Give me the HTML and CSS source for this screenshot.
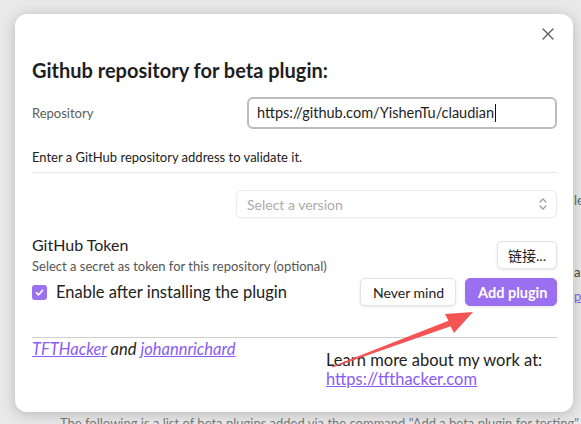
FILE: index.html
```html
<!DOCTYPE html>
<html>

	<head>
		<meta charset="UTF-8">
		<title>Add beta plugin</title>
		<link rel="stylesheet" href="styles.css">
	</head>

	<body>
		<!--page behind the modal-->
		<div class="page">
			<div class="page-side">
				<p class="side-word first">leave</p>
				<p class="side-word second">and</p>
				<p class="side-word third"><a href="#">plugin</a></p>
			</div>
			<p class="page-note">The following is a list of beta plugins added via the command "Add a beta plugin for testing". You can disable</p>
		</div>

		<!--modal-->
		<div class="modal">
			<div class="modal-close">
				<svg width="12" height="12" viewBox="0 0 12 12">
					<path d="M1 1L11 11M11 1L1 11" stroke="#5a5a5a" stroke-width="1.3" fill="none" stroke-linecap="round" />
				</svg>
			</div>
			<h2 class="modal-title">Github repository for beta plugin:</h2>

			<div class="row repo-row">
				<div class="row-label">Repository</div>
				<div class="text-input">https://github.com/YishenTu/claudian<span class="caret"></span></div>
			</div>
			<div class="row-desc">Enter a GitHub repository address to validate it.</div>

			<div class="row version-row">
				<div class="select">
					<span>Select a version</span>
					<svg width="10" height="14" viewBox="0 0 10 14">
						<path d="M2 5L5 2L8 5M2 9L5 12L8 9" stroke="#9a9a9a" stroke-width="1.2" fill="none" stroke-linecap="round" stroke-linejoin="round" />
					</svg>
				</div>
			</div>

			<div class="row token-row">
				<div class="token-info">
					<div class="token-name">GitHub Token</div>
					<div class="token-desc">Select a secret as token for this repository (optional)</div>
				</div>
				<button class="btn btn-small">链接...</button>
			</div>

			<div class="row action-row">
				<label class="check">
					<span class="check-box">
						<svg width="11" height="11" viewBox="0 0 11 11">
							<path d="M2.5 5.8L4.6 7.8L8.6 3.4" stroke="#fff" stroke-width="1.6" fill="none" stroke-linecap="round" stroke-linejoin="round" />
						</svg>
					</span>
					Enable after installing the plugin
				</label>
				<div class="actions">
					<button class="btn btn-wide">Never mind</button>
					<button class="btn btn-accent">Add plugin</button>
				</div>
			</div>

			<div class="footer">
				<div class="credits"><a href="#">TFTHacker</a> and <a href="#">johannrichard</a></div>
				<div class="more">
					<div>Learn more about my work at:</div>
					<a href="#">https://tfthacker.com</a>
				</div>
			</div>
		</div>

		<!--red arrow drawn on top-->
		<svg class="arrow" width="581" height="424" viewBox="0 0 581 424">
			<polygon points="332,366.5 448.4,320.7 445,314 473,312 454,333 450.6,326.3 332.6,367.4" fill="#f55454" />
		</svg>
	</body>

</html>
```
FILE: styles.css
```css
* {
	margin: 0;
	padding: 0;
	box-sizing: border-box;
}

body {
	width: 581px;
	height: 424px;
	overflow: hidden;
	position: relative;
	background-color: #e9e9e9;
	font-family: "Lato", "Noto Sans CJK SC", sans-serif;
	color: #222;
}

a {
	color: #8a5cf5;
}

/* page behind */
.page {
	width: 700px;
	color: #666;
	font-size: 13px;
	line-height: 18px;
	white-space: nowrap;
}

.page-side {
	padding-left: 574px;
	height: 410px;
}

.first {
	padding-top: 191px;
}

.second {
	margin-top: 54px;
	color: #444;
}

.third {
	margin-top: 6px;
}

.page-note {
	padding-left: 60px;
	margin-top: 4px;
	color: #7a7a7a;
}

/* modal */
.modal {
	position: absolute;
	left: 15px;
	top: 14px;
	width: 558px;
	height: 398px;
	background-color: #fff;
	border-radius: 12px;
	box-shadow: 0 2px 14px rgba(0, 0, 0, 0.22);
	padding: 42px 16px 0 17px;
}

.modal-close {
	position: absolute;
	right: 19px;
	top: 14px;
	width: 12px;
	height: 12px;
	line-height: 0;
}

.modal-title {
	font-size: 20px;
	font-weight: 700;
	line-height: 28px;
	color: #1e1e1e;
}

.row {
	display: flex;
	align-items: center;
}

.repo-row {
	margin-top: 13px;
}

.row-label {
	font-size: 13px;
	color: #5c5c5c;
}

.text-input {
	margin-left: auto;
	width: 310px;
	height: 32px;
	border: 2px solid #bcbcbc;
	border-radius: 6px;
	padding: 0 8px;
	font-size: 14.5px;
	line-height: 28px;
	color: #1e1e1e;
	display: flex;
	align-items: center;
}

.caret {
	width: 1px;
	height: 18px;
	background-color: #111;
	margin-left: 1px;
}

.row-desc {
	margin-top: 19px;
	font-size: 13px;
	line-height: 18px;
	padding-bottom: 6px;
	border-bottom: 1px solid #e6e6e6;
}

.version-row {
	margin-top: 17px;
}

.select {
	margin-left: auto;
	width: 321px;
	height: 28px;
	border: 1px solid #ebebeb;
	border-radius: 6px;
	box-shadow: 0 1px 2px rgba(0, 0, 0, 0.04);
	padding: 0 8px 0 10px;
	display: flex;
	align-items: center;
	justify-content: space-between;
	font-size: 14px;
	color: #ababab;
}

.token-row {
	margin-top: 16px;
	justify-content: space-between;
	align-items: flex-start;
}

.token-name {
	font-size: 16px;
	line-height: 22px;
}

.token-desc {
	margin-top: 1px;
	font-size: 13px;
	line-height: 18px;
	color: #555;
}

.btn {
	height: 28px;
	padding: 0 12px;
	border: 1px solid #e3e3e3;
	border-radius: 5px;
	background-color: #fff;
	box-shadow: 0 1px 3px rgba(0, 0, 0, 0.1);
	font-family: "Lato", "Noto Sans CJK SC", sans-serif;
	font-size: 14px;
	color: #222;
	white-space: nowrap;
}

.btn-small {
	width: 60px;
	padding: 0;
	margin-top: 7px;
}

.action-row {
	margin-top: 3px;
	justify-content: space-between;
}

.check {
	display: flex;
	align-items: center;
	gap: 9px;
	font-size: 16.5px;
}

.check-box {
	width: 15px;
	height: 15px;
	border-radius: 3px;
	background-color: #9b71ef;
	display: flex;
	align-items: center;
	justify-content: center;
}

.actions {
	display: flex;
	gap: 9px;
}

.btn-wide {
	width: 96px;
}

.btn-accent {
	width: 92px;
	font-size: 14.5px;
	border-color: #9a70f0;
	background-color: #9a70f0;
	color: #fff;
	font-weight: 700;
}

.footer {
	margin-top: 31px;
	border-top: 1px solid #cfcfcf;
	display: grid;
	grid-template-columns: 294px 1fr;
	padding-top: 1px;
}

.credits {
	font-size: 16.5px;
	font-style: italic;
	line-height: 20px;
}

.more {
	padding-top: 12px;
	font-size: 16.5px;
	line-height: 19px;
}

/* arrow */
.arrow {
	position: absolute;
	left: 0;
	top: 0;
}
```
